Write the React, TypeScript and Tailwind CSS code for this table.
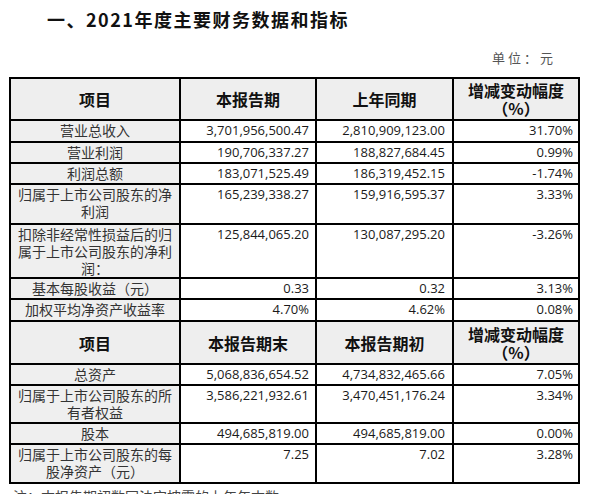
const cjk = "font-['Noto_Sans_CJK_SC',sans-serif]";
const num = "font-['Open_Sans','Noto_Sans_CJK_SC',sans-serif]";

type Row = {
  label: string[];
  values: string[];
  h: string;
};

const firstRows: Row[] = [
  { label: ["营业总收入"], values: ["3,701,956,500.47", "2,810,909,123.00", "31.70%"], h: "h-[22px]" },
  { label: ["营业利润"], values: ["190,706,337.27", "188,827,684.45", "0.99%"], h: "h-[21px]" },
  { label: ["利润总额"], values: ["183,071,525.49", "186,319,452.15", "-1.74%"], h: "h-[21px]" },
  { label: ["归属于上市公司股东的净", "利润"], values: ["165,239,338.27", "159,916,595.37", "3.33%"], h: "h-[40px]" },
  {
    label: ["扣除非经常性损益后的归", "属于上市公司股东的净利", "润："],
    values: ["125,844,065.20", "130,087,295.20", "-3.26%"],
    h: "h-[54px]",
  },
  { label: ["基本每股收益（元）"], values: ["0.33", "0.32", "3.13%"], h: "h-[21px]" },
  { label: ["加权平均净资产收益率"], values: ["4.70%", "4.62%", "0.08%"], h: "h-[22px]" },
];

const secondRows: Row[] = [
  { label: ["总资产"], values: ["5,068,836,654.52", "4,734,832,465.66", "7.05%"], h: "h-[21px]" },
  { label: ["归属于上市公司股东的所", "有者权益"], values: ["3,586,221,932.61", "3,470,451,176.24", "3.34%"], h: "h-[38px]" },
  { label: ["股本"], values: ["494,685,819.00", "494,685,819.00", "0.00%"], h: "h-[21px]" },
];

const lastRow: Row = {
  label: ["归属于上市公司股东的每", "股净资产（元）"],
  values: ["7.25", "7.02", "3.28%"],
  h: "h-[37px]",
};

function HeaderRow({ cols, h }: { cols: string[]; h: string }) {
  return (
    <div className={`flex ${h} border-b-2 border-black bg-[#eeeeee] text-[16px] font-bold text-[#111] ${cjk}`}>
      <div className="flex w-[170px] items-center justify-center border-r-2 border-black">{cols[0]}</div>
      <div className="flex w-[136px] items-center justify-center border-r-2 border-black">{cols[1]}</div>
      <div className="flex w-[137px] items-center justify-center border-r-2 border-black">{cols[2]}</div>
      <div className="flex flex-1 flex-col items-center justify-center leading-[18px]">
        <span>增减变动幅度</span>
        <span>（%）</span>
      </div>
    </div>
  );
}

function DataRow({ row, last }: { row: Row; last?: boolean }) {
  return (
    <div className={`flex ${row.h} ${last ? "" : "border-b-2 border-black"}`}>
      <div
        className={`w-[170px] border-r-2 border-black bg-[#efefef] px-[6px] pt-[1px] text-center text-[14px] leading-[17px] text-[#333] ${cjk}`}
      >
        {row.label.map((line, i) => (
          <div key={i}>{line}</div>
        ))}
      </div>
      <div className={`w-[136px] border-r-2 border-black pr-[6px] pt-[1px] text-right text-[13px] leading-[17px] text-[#1a1a1a] ${num}`}>
        {row.values[0]}
      </div>
      <div className={`w-[137px] border-r-2 border-black pr-[7px] pt-[1px] text-right text-[13px] leading-[17px] text-[#1a1a1a] ${num}`}>
        {row.values[1]}
      </div>
      <div className={`flex-1 pr-[5px] pt-[1px] text-right text-[13px] leading-[17px] text-[#1a1a1a] ${num}`}>
        {row.values[2]}
      </div>
    </div>
  );
}

export default function App() {
  return (
    <div className="h-[494px] w-[590px] overflow-hidden bg-white">
      <h1 className={`pl-[47px] pt-[8px] text-[18px] font-bold leading-[22px] tracking-[1.5px] text-[#111] ${cjk}`}>
        一、2021年度主要财务数据和指标
      </h1>
      <p className={`mt-[19px] pr-[34px] text-right text-[13px] leading-[18px] tracking-[3px] text-[#555] ${cjk}`}>
        单位：元
      </p>
      <div className="ml-[9px] mt-[10px] w-[571px] border-2 border-black">
        <HeaderRow cols={["项目", "本报告期", "上年同期"]} h="h-[42px]" />
        {firstRows.map((row) => (
          <DataRow key={row.label.join("")} row={row} />
        ))}
        <HeaderRow cols={["项目", "本报告期末", "本报告期初"]} h="h-[43px]" />
        {secondRows.map((row) => (
          <DataRow key={row.label.join("")} row={row} />
        ))}
        <DataRow row={lastRow} last />
      </div>
      <p className={`mt-[3px] pl-[13px] text-[14px] leading-[18px] text-[#444] ${cjk}`}>
        注：本报告期初数同法定披露的上年年末数。
      </p>
    </div>
  );
}
